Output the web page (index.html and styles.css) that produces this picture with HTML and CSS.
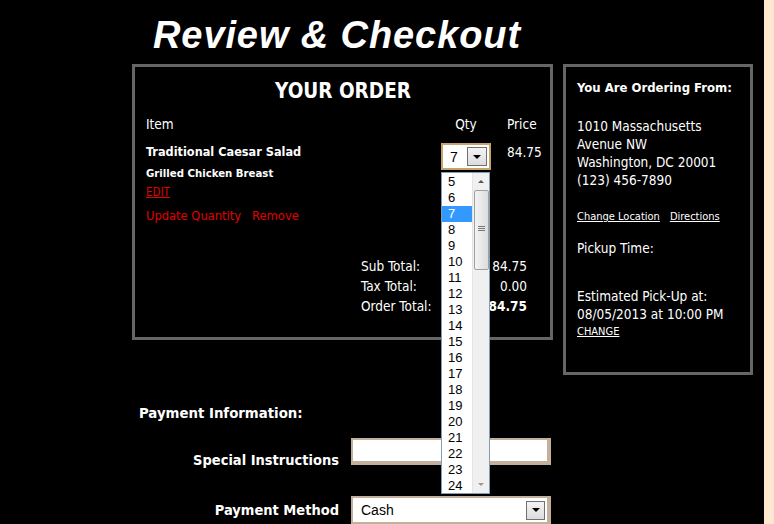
FILE: index.html
```html
<!DOCTYPE html>
<html>
<head>
<meta charset="utf-8">
<link rel="stylesheet" href="styles.css">
</head>
<body>
<div class="page">
  <div class="main">
    <h1 class="title">Review &amp; Checkout</h1>
    <div class="boxes">
      <div class="order-box">
        <h2 class="order-head">YOUR ORDER</h2>
        <div class="order-grid">
          <div class="col-h">Item</div>
          <div class="col-h qty-h">Qty</div>
          <div class="col-h price-h">Price</div>
          <div class="item-cell">
            <div class="item-name">Traditional Caesar Salad</div>
            <div class="item-mod">Grilled Chicken Breast</div>
            <a class="edit-link">EDIT</a>
            <div class="item-actions"><a>Update Quantity</a><a>Remove</a></div>
          </div>
          <div class="qty-cell">
            <div class="qty-select">
              <span class="qty-val">7</span>
              <span class="sel-btn"><span class="tri"></span></span>
            </div>
          </div>
          <div class="price-cell">84.75</div>
        </div>
        <div class="totals">
          <span>Sub Total:</span><span class="tv">84.75</span>
          <span>Tax Total:</span><span class="tv">0.00</span>
          <span>Order Total:</span><span class="tv strong">84.75</span>
        </div>
      </div>
      <div class="side-box">
        <div class="side-head">You Are Ordering From:</div>
        <div class="addr">1010 Massachusetts<br>Avenue NW<br>Washington, DC 20001<br>(123) 456-7890</div>
        <div class="side-links"><a>Change Location</a><a>Directions</a></div>
        <div class="pickup">Pickup Time:</div>
        <div class="est">Estimated Pick-Up at:<br>08/05/2013 at 10:00 PM</div>
        <a class="change">CHANGE</a>
      </div>
    </div>
    <div class="payment">
      <div class="pay-head">Payment Information:</div>
      <div class="form-grid">
        <label class="f-label si">Special Instructions</label>
        <div class="f-input"></div>
        <label class="f-label pm">Payment Method</label>
        <div class="f-select"><span>Cash</span><span class="sel-btn big"><span class="tri"></span></span></div>
      </div>
    </div>
    <div class="dropdown">
      <ul class="dd-list">
        <li>5</li><li>6</li><li class="sel">7</li><li>8</li><li>9</li><li>10</li><li>11</li><li>12</li><li>13</li><li>14</li><li>15</li><li>16</li><li>17</li><li>18</li><li>19</li><li>20</li><li>21</li><li>22</li><li>23</li><li>24</li>
      </ul>
      <div class="dd-scroll">
        <span class="arr up"></span>
        <div class="thumb"><span class="grip"></span></div>
        <span class="arr down"></span>
      </div>
    </div>
  </div>
  <div class="edge"></div>
</div>
</body>
</html>
```

FILE: styles.css
```css
* { box-sizing: border-box; }
html, body { margin: 0; padding: 0; background: #000; }
body {
  font-family: "DejaVu Sans Condensed", "DejaVu Sans", sans-serif;
  color: #fff;
  font-size: 13.5px;
  overflow: hidden;
}
a { color: inherit; cursor: pointer; }
.page { display: flex; height: 524px; overflow: hidden; }
.main { flex: 1; position: relative; padding-left: 132px; }
.edge { width: 10px; background: #fde8cf; }

.title {
  margin: 0;
  height: 64px;
  padding: 13px 0 0 21px;
  font-family: "Liberation Sans", Arial, sans-serif;
  font-style: italic;
  font-weight: bold;
  font-size: 38px;
  letter-spacing: 0.9px;
  line-height: 44px;
  color: #fff;
}

.boxes { display: flex; gap: 10px; align-items: flex-start; }

.order-box {
  width: 421px;
  height: 276px;
  border: 3px solid #666;
  padding: 12px 11px 0 11px;
}
.order-head {
  margin: 0;
  text-align: center;
  font-size: 20.5px;
  line-height: 24px;
  font-weight: bold;
  padding-left: 1px;
}
.order-grid {
  display: grid;
  grid-template-columns: 295px 50px 1fr;
  margin-top: 13px;
  row-gap: 12px;
}
.col-h { line-height: 16px; }
.qty-h { text-align: center; }
.price-h { padding-left: 16px; }
.item-name { font-weight: bold; font-size: 12.6px; line-height: 16px; }
.item-mod { font-weight: bold; font-size: 11.3px; line-height: 14px; margin-top: 7px; }
.edit-link { display: block; color: #e00000; font-size: 11.5px; line-height: 14px; margin-top: 4px; text-decoration: underline; }
.item-actions { margin-top: 9px; color: #e00000; font-size: 12.8px; line-height: 16px; display: flex; gap: 11px; }

.qty-select {
  width: 50px;
  height: 27px;
  border: 2px solid #c6a36a;
  background: #fff;
  display: flex;
  align-items: center;
  justify-content: space-between;
  padding: 0 2px 0 7px;
  margin-top: -1px;
  font-family: "Liberation Sans", Arial, sans-serif;
  color: #000;
  font-size: 14px;
}
.sel-btn {
  width: 20px;
  height: 19px;
  border: 1px solid #707070;
  background: linear-gradient(#f4f4f4, #dcdcdc);
  display: flex;
  align-items: center;
  justify-content: center;
}
.tri {
  width: 0; height: 0;
  border-left: 4px solid transparent;
  border-right: 4px solid transparent;
  border-top: 4px solid #000;
}
.price-cell { padding-left: 16px; line-height: 16px; }

.totals {
  display: grid;
  grid-template-columns: 80px 86px;
  row-gap: 4px;
  margin: 34px 0 0 215px;
  line-height: 16px;
}
.tv { text-align: right; }
.strong { font-weight: bold; }

.side-box {
  width: 190px;
  height: 311px;
  border: 3px solid #666;
  padding: 12px 11px 0 11px;
  line-height: 18px;
}
.side-head { font-weight: bold; font-size: 13px; }
.addr { margin-top: 20px; }
.side-links { margin-top: 19px; font-size: 11px; display: flex; gap: 10px; }
.side-links a, .change { text-decoration: underline; }
.pickup { margin-top: 13px; }
.est { margin-top: 30px; }
.change { display: block; font-size: 11px; }

.payment { padding-top: 29px; }
.pay-head { font-weight: bold; font-size: 14.8px; line-height: 18px; padding-left: 7px; }
.form-grid {
  display: grid;
  grid-template-columns: 207px 200px;
  column-gap: 12px;
  row-gap: 31px;
  margin-top: 16px;
  align-items: center;
}
.f-label { text-align: right; font-weight: bold; font-size: 14.5px; line-height: 18px; }
.f-label.si { align-self: end; margin-bottom: -4px; }
.f-input {
  height: 27px;
  background: #fff;
  border: 2px solid #c2b09a;
  border-right-width: 4px;
  border-bottom-width: 4px;
}
.f-select {
  height: 28px;
  background: #fff;
  border: 2px solid #c2b09a;
  border-right-width: 4px;
  display: flex;
  align-items: center;
  justify-content: space-between;
  padding: 0 2px 0 8px;
  color: #000;
  font-family: "Liberation Sans", Arial, sans-serif;
  font-size: 14px;
}
.sel-btn.big { width: 19px; height: 19px; }

.dropdown {
  position: absolute;
  left: 441px;
  top: 172px;
  width: 49px;
  height: 322px;
  border: 1px solid #7f9db9;
  background: #fff;
  display: flex;
}
.dd-list {
  list-style: none;
  margin: 0;
  padding: 1px 0 0 0;
  flex: 1;
  font-family: "Liberation Sans", Arial, sans-serif;
  font-size: 13px;
  color: #000;
}
.dd-list li { height: 16px; line-height: 16px; padding-left: 6px; }
.dd-list li.sel { background: #3399ff; color: #fff; }
.dd-scroll {
  width: 17px;
  background: #f0f0f0;
  border-left: 1px solid #e4e4e4;
  position: relative;
}
.arr {
  position: absolute;
  left: 5px;
  width: 0; height: 0;
  border-left: 3px solid transparent;
  border-right: 3px solid transparent;
}
.arr.up { top: 7px; border-bottom: 3px solid #555; }
.arr.down { bottom: 7px; border-top: 3px solid #999; }
.thumb {
  position: absolute;
  left: 1px;
  top: 17px;
  width: 15px;
  height: 80px;
  border: 1px solid #a0a0a0;
  border-radius: 2px;
  background: linear-gradient(90deg, #f4f4f4, #dcdcdc);
}
.grip {
  position: absolute;
  left: 3px;
  top: 35px;
  width: 7px;
  height: 5px;
  border-top: 1px solid #777;
  border-bottom: 1px solid #777;
}
.grip::after {
  content: "";
  position: absolute;
  left: 0; right: 0; top: 1px;
  border-top: 1px solid #777;
}
```
